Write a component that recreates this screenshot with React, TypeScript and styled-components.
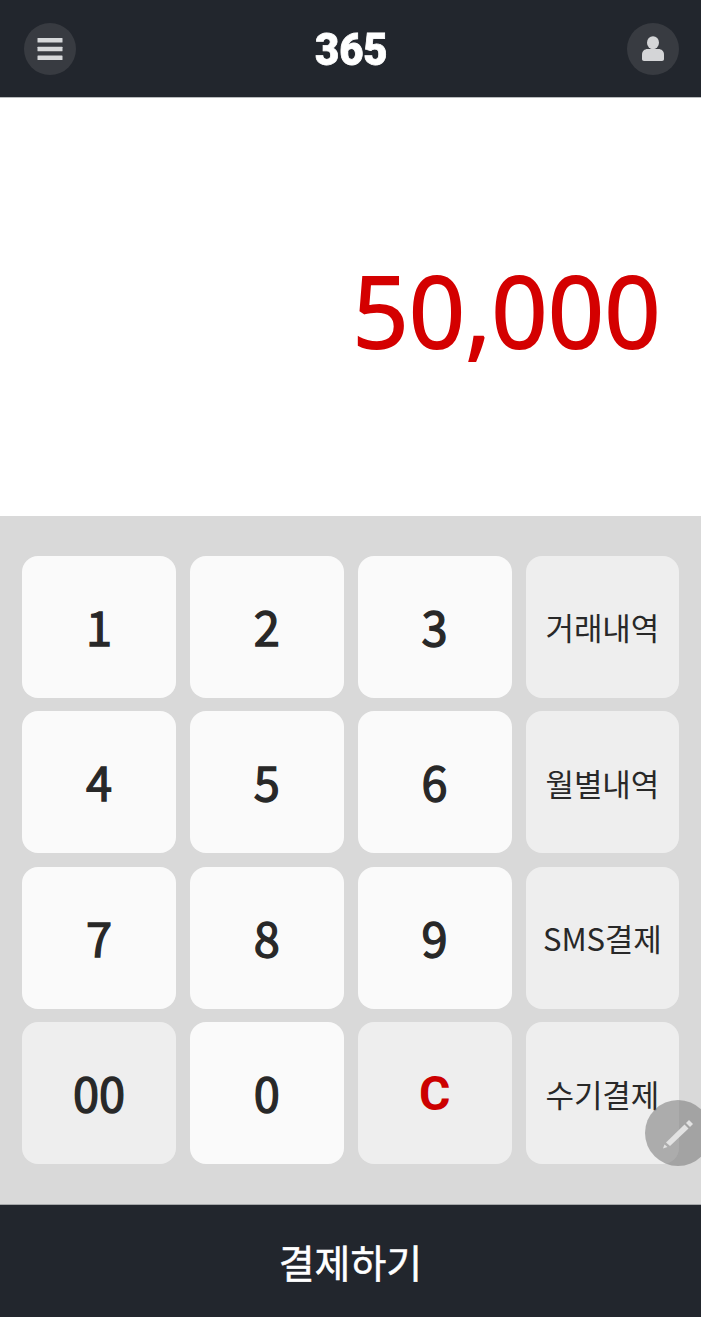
import React from "react";
import styled, { createGlobalStyle } from "styled-components";

const Global = createGlobalStyle`
  html, body { margin: 0; padding: 0; background: #fff; }
  body { font-family: "Noto Sans CJK KR", "Noto Sans", sans-serif; }
`;

const Page = styled.div`
  position: relative;
  width: 701px;
  height: 1317px;
  overflow: hidden;
  display: flex;
  flex-direction: column;
`;

const Header = styled.header`
  height: 97px;
  flex: none;
  background: #22262d;
  border-bottom: 1px solid #b9bbbd;
  display: flex;
  align-items: center;
  justify-content: space-between;
  padding: 0 22px 0 24px;
  box-sizing: content-box;
`;

const RoundButton = styled.button`
  width: 52px;
  height: 52px;
  padding: 0;
  border: 0;
  border-radius: 50%;
  background: #383b41;
  display: flex;
  align-items: center;
  justify-content: center;
`;

const Logo = styled.div`
  font-family: "Roboto", sans-serif;
  font-weight: 900;
  font-size: 44px;
  line-height: 1;
  letter-spacing: 0;
  color: #fff;
  -webkit-text-stroke: 0.8px #fff;
  transform: scaleX(0.95) translateY(1px);
  filter: blur(0.6px);
`;

const Display = styled.div`
  height: 418px;
  flex: none;
  background: #fff;
  display: flex;
  align-items: center;
  justify-content: flex-end;
  padding: 5px 40px 0 0;
  box-sizing: border-box;
`;

const Amount = styled.div`
  font-family: "Open Sans", sans-serif;
  font-size: 98px;
  line-height: 1;
  letter-spacing: 0.5px;
  color: #d40000;
  font-weight: 400;
  -webkit-text-stroke: 2px #d40000;
`;

const Pad = styled.div`
  flex: 1;
  background: #d9d9d9;
  display: grid;
  grid-template-columns: repeat(4, 1fr);
  grid-template-rows: repeat(4, 1fr);
  column-gap: 14px;
  row-gap: 13.67px;
  padding: 40px 21.75px 40px 22.25px;
`;

const Key = styled.button<{ $soft?: boolean; $label?: boolean; $red?: boolean }>`
  border: 0;
  padding: ${(p) => (p.$red ? "1px 0 0" : p.$label ? "0" : "0 0 3px")};
  border-radius: 16px;
  background: ${(p) => (p.$soft ? "#eeeeee" : "#fafafa")};
  color: ${(p) => (p.$red ? "#cc0000" : "#282828")};
  font-family: ${(p) => (p.$red ? '"Roboto", sans-serif' : "inherit")};
  font-size: ${(p) => (p.$red ? "48px" : p.$label ? "31px" : "47px")};
  font-weight: ${(p) => (p.$red ? 700 : 400)};
  letter-spacing: ${(p) => (p.$label ? "-0.1px" : "0")};
  -webkit-text-stroke: ${(p) => (p.$red || p.$label ? "0" : "1.3px")} #282828;
  line-height: 1;
  display: flex;
  align-items: center;
  justify-content: center;
`;

const Footer = styled.button`
  height: 113px;
  flex: none;
  border: 0;
  border-top: 1px solid #a5a7a9;
  background: #22262d;
  color: #fff;
  font-family: inherit;
  font-size: 39px;
  font-weight: 400;
  -webkit-text-stroke: 0.5px #fff;
  padding: 0;
`;

const Fab = styled.button`
  position: absolute;
  left: 645px;
  top: 1100px;
  width: 66px;
  height: 66px;
  padding: 0;
  border: 0;
  border-radius: 50%;
  background: rgba(124, 124, 124, 0.58);
  display: flex;
  align-items: center;
  justify-content: center;
`;

const rows: { t: string; soft?: boolean; label?: boolean; red?: boolean }[] = [
  { t: "1" }, { t: "2" }, { t: "3" }, { t: "거래내역", soft: true, label: true },
  { t: "4" }, { t: "5" }, { t: "6" }, { t: "월별내역", soft: true, label: true },
  { t: "7" }, { t: "8" }, { t: "9" }, { t: "SMS결제", soft: true, label: true },
  { t: "00", soft: true }, { t: "0" }, { t: "C", soft: true, red: true }, { t: "수기결제", soft: true, label: true },
];

export default function App() {
  return (
    <Page>
      <Global />
      <Header>
        <RoundButton aria-label="menu">
          <svg width="26" height="24" viewBox="0 0 26 24">
            <rect x="0.5" y="1" width="25" height="4.6" rx="0.6" fill="#d6d8da" />
            <rect x="0.5" y="9.7" width="25" height="4.6" rx="0.6" fill="#d6d8da" />
            <rect x="0.5" y="18.4" width="25" height="4.6" rx="0.6" fill="#d6d8da" />
          </svg>
        </RoundButton>
        <Logo>365</Logo>
        <RoundButton aria-label="user">
          <svg width="24" height="40" viewBox="0 0 24 40">
            <ellipse cx="12" cy="13.700" rx="6" ry="6.500" fill="#d4d5d7" />
            <path d="M1 30v-4.500c0-3.400 2.600-5.500 5.500-5.500h11c2.900 0 5.500 2.100 5.500 5.500v4.500c0 1.200-.8 2-2 2H3c-1.200 0-2-.8-2-2z" fill="#d4d5d7" />
          </svg>
        </RoundButton>
      </Header>
      <Display>
        <Amount>50,000</Amount>
      </Display>
      <Pad>
        {rows.map((k) => (
          <Key key={k.t} $soft={k.soft} $label={k.label} $red={k.red}>
            {k.t}
          </Key>
        ))}
      </Pad>
      <Footer>결제하기</Footer>
      <Fab aria-label="edit">
        <svg width="34" height="34" viewBox="0 0 34 34">
          <path d="M5 26.500 L23.500 8.500 L27.500 12.500 L9 30 Z" fill="#e2e2e2" />
          <path d="M25 7 L28 4 L32 8 L29 11 Z" fill="#e2e2e2" />
          <path d="M3.500 28.500 L6.500 31 L2 32.500 Z" fill="#e2e2e2" />
        </svg>
      </Fab>
    </Page>
  );
}
